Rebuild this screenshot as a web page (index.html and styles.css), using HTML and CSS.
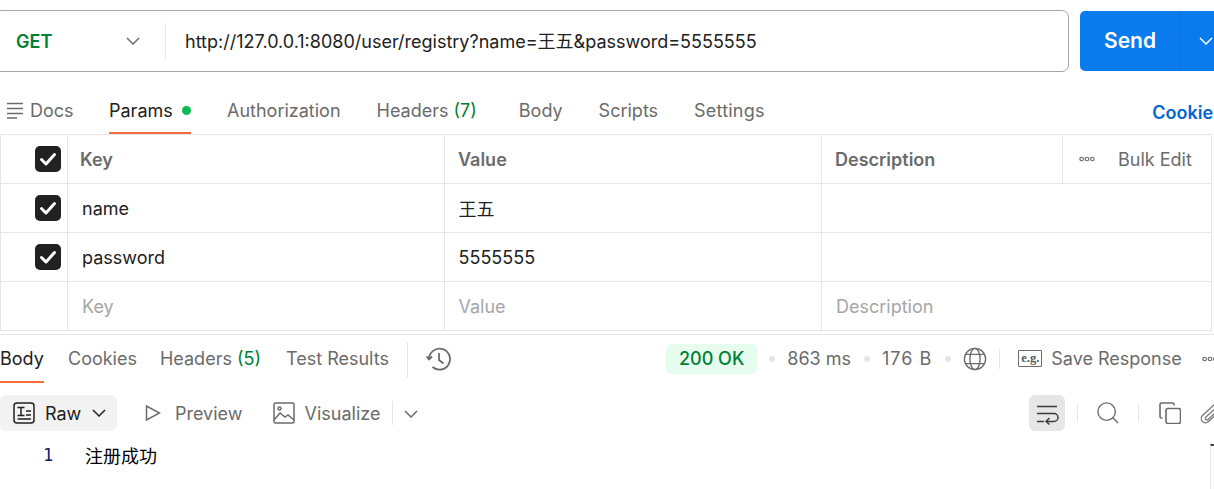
FILE: index.html
```html
<!DOCTYPE html>
<html lang="zh">
<head>
<meta charset="utf-8">
<title>Postman</title>
<link rel="stylesheet" href="styles.css">
</head>
<body>
<div class="page">
  <div class="urlrow">
    <div class="urlbox">
      <span class="method">GET</span>
      <svg class="chev method-chev" viewBox="0 0 14 8"><path d="M1 1l6 6 6-6"/></svg>
      <span class="urldiv"></span>
      <span class="url">http://127.0.0.1:8080/user/registry?name=王五&amp;password=5555555</span>
    </div>
    <div class="send">
      <span class="send-label">Send</span>
      <span class="send-more"><svg class="chev white" viewBox="0 0 14 8"><path d="M1 1l6 6 6-6"/></svg></span>
    </div>
  </div>

  <div class="reqtabs">
    <span class="tab docs"><svg class="ic18" viewBox="0 0 18 18"><path d="M1 1.500h16M1 6.500h16M1 11.500h16M1 16h10"/></svg>Docs</span>
    <span class="tab active params">Params<i class="dot"></i></span>
    <span class="tab auth">Authorization</span>
    <span class="tab hdrs">Headers <em>(7)</em></span>
    <span class="tab body-t">Body</span>
    <span class="tab scripts">Scripts</span>
    <span class="tab settings">Settings</span>
    <span class="cookies">Cookies</span>
  </div>

  <div class="table">
    <div class="row">
      <div class="cell c0"><span class="check"><svg viewBox="0 0 26 26"><path d="M6.500 13.500l4.500 4.500 8.500-9.500"/></svg></span></div>
      <div class="cell c1 th">Key</div>
      <div class="cell c2 th">Value</div>
      <div class="cell c3 th">Description</div>
      <div class="cell c4"><svg class="more" viewBox="0 0 18 6"><circle cx="3" cy="3" r="2"/><circle cx="9" cy="3" r="2"/><circle cx="15" cy="3" r="2"/></svg><span class="bulk">Bulk Edit</span></div>
    </div>
    <div class="row">
      <div class="cell c0"><span class="check"><svg viewBox="0 0 26 26"><path d="M6.500 13.500l4.500 4.500 8.500-9.500"/></svg></span></div>
      <div class="cell c1">name</div>
      <div class="cell c2">王五</div>
      <div class="cell c3w"></div>
    </div>
    <div class="row">
      <div class="cell c0"><span class="check"><svg viewBox="0 0 26 26"><path d="M6.500 13.500l4.500 4.500 8.500-9.500"/></svg></span></div>
      <div class="cell c1">password</div>
      <div class="cell c2">5555555</div>
      <div class="cell c3w"></div>
    </div>
    <div class="row ph">
      <div class="cell c0"></div>
      <div class="cell c1">Key</div>
      <div class="cell c2">Value</div>
      <div class="cell c3w">Description</div>
    </div>
  </div>

  <div class="resbar">
    <span class="tab active r-body">Body</span>
    <span class="tab r-cookies">Cookies</span>
    <span class="tab r-hdrs">Headers <em>(5)</em></span>
    <span class="tab r-test">Test Results</span>
    <span class="vline r-v1"></span>
    <svg class="hist" viewBox="0 0 24 24"><path d="M2 12.500A10.500 10.500 0 1 1 5.500 20M-0.500 9.500l2.500 3 3-3M12 6v7l4.500 3.500"/></svg>
    <div class="status">
      <span class="ok">200 OK</span>
      <i class="sep"></i><span>863 ms</span>
      <i class="sep"></i><span class="size">176 B</span>
      <i class="sep"></i>
      <svg class="globe" viewBox="0 0 26 26"><circle cx="13" cy="13" r="11.500"/><ellipse cx="13" cy="13" rx="5.500" ry="11.500"/><path d="M3 8h20M3 18h20"/></svg>
      <span class="vline v2"></span>
      <span class="eg">e.g.</span>
      <span class="save">Save Response</span>
      <svg class="more more2" viewBox="0 0 18 6"><circle cx="3" cy="3" r="2"/><circle cx="9" cy="3" r="2"/><circle cx="15" cy="3" r="2"/></svg>
    </div>
  </div>

  <div class="viewbar">
    <span class="raw">
      <svg class="ic22" viewBox="0 0 22 22"><rect x="1" y="1" width="20" height="20" rx="3"/><path d="M4.500 5.500h7M8 5.500v8M4.500 13.500h7M13 9h5M13 13h5M4.500 17h13.500"/></svg>
      Raw
      <svg class="chev dark" viewBox="0 0 14 8"><path d="M1 1l6 6 6-6"/></svg>
    </span>
    <span class="view preview"><svg class="ic18p" viewBox="0 0 16 18"><path d="M1.500 2v14l13-7z"/></svg>Preview</span>
    <span class="view vis"><svg class="ic22" viewBox="0 0 22 22"><rect x="1" y="1" width="20" height="20" rx="1.500"/><path d="M1 18l6-7 5 4 3-2 6 5"/><circle cx="6.500" cy="6.500" r="1.500"/></svg>Visualize</span>
    <span class="vline v3"></span>
    <svg class="chev v-chev" viewBox="0 0 14 8"><path d="M1 1l6 6 6-6"/></svg>
    <div class="tools">
      <span class="wrap"><svg viewBox="0 0 22 20"><path d="M1 1.500h20M1 8.500h17a4 4 0 0 1 0 8h-8M1 16.500h7M13.500 13l-3.500 3.500 3.500 3"/></svg></span>
      <span class="vline v4"></span>
      <svg class="search" viewBox="0 0 24 24"><circle cx="10.500" cy="10.500" r="9.500"/><path d="M17 17l6 6"/></svg>
      <span class="vline v5"></span>
      <svg class="copy" viewBox="0 0 22 22"><rect x="7" y="6.500" width="14.500" height="15" rx="2"/><path d="M3.500 16H2.500A1.500 1.500 0 0 1 1 14.500V2.500A1.500 1.500 0 0 1 2.500 1H13.500A1.500 1.500 0 0 1 15 2.500V3.500"/></svg>
      <svg class="clip" viewBox="0 0 22 22"><path d="M15 2L2.500 13.500a4 4 0 0 0 6 6L21 8M17 5L6 15a1.500 1.500 0 0 0 2 2.500L18 8"/></svg>
    </div>
  </div>

  <div class="code">
    <span class="ln">1</span>
    <span class="resp">注册成功</span>
    <span class="scroll"></span>
  </div>
</div>
</body>
</html>
```

FILE: styles.css
```css
* { box-sizing: border-box; }
html, body { margin: 0; padding: 0; height: 489px; overflow: hidden; background: #fff; }
body { font-family: Inter, "Noto Sans CJK SC", sans-serif; font-size: 18px; color: #212121; }
.page { width: 1214px; height: 489px; overflow: hidden; }

.urlrow { display: flex; align-items: center; padding-top: 10px; height: 72px; margin-left: -6px; width: 1320px; }
.urlbox { width: 1075px; height: 62px; border: 1px solid #a6a6a6; border-radius: 7px; display: flex; align-items: center; padding-left: 21px; flex: none; }
.method { color: #007f31; font-weight: 600; font-size: 18px; width: 110px; }
.chev { fill: none; stroke: #6b6b6b; stroke-width: 1.500; width: 14px; height: 8px; flex: none; }
.urldiv { width: 1px; height: 36px; background: #e6e6e6; margin-left: 25px; margin-right: 19px; }
.url { font-size: 18px; color: #212121; white-space: nowrap; padding-bottom: 2px; }
.send { flex: none; display: flex; width: 200px; height: 60px; margin-left: 11px; background: #097bed; border-radius: 5px; color: #fff; font-weight: 600; font-size: 21px; }
.send-label { width: 101px; display: flex; align-items: center; justify-content: center; border-right: 1px solid #0a6fd6; padding-bottom: 2px; }
.send-more { padding-left: 18px; display: flex; align-items: center; }
.white { stroke: #fff; }

.tab { color: #6b6b6b; white-space: nowrap; display: inline-flex; align-items: center; }
.tab em { font-style: normal; color: #007f31; margin-left: 5px; }
.reqtabs { display: flex; height: 62px; padding-left: 6px; align-items: stretch; }
.reqtabs .tab { padding-top: 16px; padding-bottom: 1px; }
.ic18 { width: 18px; height: 18px; fill: none; stroke: #6b6b6b; stroke-width: 1.500; margin-right: 6px; flex: none; }
.docs { width: 103px; }
.active { color: #212121; border-bottom: 2px solid #ff6c37; }
.reqtabs .active { width: 82px; margin-right: 36px; padding-top: 17px; padding-bottom: 0; color: #212121; }
.dot { width: 9px; height: 9px; background: #0cbb52; border-radius: 50%; margin-left: 9px; }
.auth { margin-right: 36px; }
.hdrs { margin-right: 42px; }
.body-t { margin-right: 36px; }
.scripts { margin-right: 36px; }
.settings { letter-spacing: 0.2px; }
.cookies { margin-left: auto; color: #0265d2; font-weight: 600; padding-top: 30px; white-space: nowrap; margin-right: -9px; }

.table { width: 1212px; border-top: 1px solid #e6e6e6; border-left: 1px solid #e6e6e6; border-right: 1px solid #e6e6e6; }
.row { display: flex; height: 49px; border-bottom: 1px solid #e6e6e6; align-items: stretch; }
.cell { display: flex; align-items: center; border-right: 1px solid #e6e6e6; padding-left: 14px; flex: none; }
.c0 { width: 67px; padding-left: 34px; }
.c1 { width: 377px; }
.c2 { width: 377px; padding-left: 13.500px; }
.c3 { width: 241px; }
.c4 { width: 149px; border-right: 0; padding-left: 16px; }
.c3w { width: 390px; border-right: 0; }
.th { font-weight: 600; color: #6b6b6b; }
.th.c1 { padding-left: 12px; }
.th.c2, .th.c3 { padding-left: 13px; }
.check { width: 26px; height: 26px; background: #212121; border-radius: 5px; display: block; }
.check svg { width: 26px; height: 26px; display: block; fill: none; stroke: #fff; stroke-width: 3; stroke-linecap: round; stroke-linejoin: round; }
.more { width: 16px; height: 6px; fill: none; stroke: #6b6b6b; stroke-width: 1.300; flex: none; }
.bulk { color: #6b6b6b; margin-left: 23px; white-space: nowrap; }
.ph .cell { color: #a6a6a6; padding-top: 1px; }
.ph .c3w { padding-left: 14px; }

.resbar { display: flex; height: 49px; margin-top: 3px; border-top: 1px solid #e6e6e6; align-items: stretch; }
.resbar .tab { padding-bottom: 2px; }
.resbar .active { padding: 0 1px 0 0; width: 44px; margin-right: 24px; }
.r-cookies { margin-right: 23px; }
.r-hdrs { margin-right: 25px; }
.r-test { margin-right: 18px; }
.vline { width: 1px; background: #e6e6e6; flex: none; }
.r-v1 { height: 36px; margin-top: 7px; }
.hist { width: 24px; height: 24px; margin: 12px 0 0 19px; fill: none; stroke: #6b6b6b; stroke-width: 1.800; overflow: visible; }
.status { display: flex; align-items: center; margin-left: 215px; color: #6b6b6b; white-space: nowrap; height: 47px; }
.ok { background: #e5fcef; color: #007f31; border-radius: 6px; padding: 0 13px; height: 30px; display: flex; align-items: center; font-weight: 500; }
.sep { width: 6px; height: 6px; border-radius: 50%; background: #e6e6e6; margin: 0 12.500px; flex: none; }
.ok + .sep { margin: 0 12px; }
.size { letter-spacing: 1px; }
.globe { width: 24px; height: 24px; fill: none; stroke: #6b6b6b; stroke-width: 1.500; flex: none; }
.v2 { height: 20px; margin-left: 12px; margin-right: 18px; }
.eg { width: 24px; height: 17px; border: 1.500px solid #6b6b6b; border-radius: 1px; font-family: "Liberation Serif", serif; font-size: 12.500px; font-weight: 700; display: flex; align-items: center; justify-content: center; color: #555; }
.save { margin-left: 9px; }
.more2 { margin-left: 20px; }

.viewbar { display: flex; height: 48px; padding-top: 12px; align-items: flex-start; }
.raw { width: 117px; height: 36px; background: #f2f2f2; border-radius: 6px; display: flex; align-items: center; padding-left: 13px; color: #212121; gap: 10px; flex: none; }
.raw .ic22 { stroke: #212121; margin: 0; }
.dark { stroke: #212121; margin-left: 1px; }
.ic22 { width: 22px; height: 22px; fill: none; stroke: #6b6b6b; stroke-width: 1.500; flex: none; margin-right: 10px; }
.view { color: #6b6b6b; height: 36px; display: flex; align-items: center; flex: none; }
.preview { margin-left: 28px; margin-right: 30px; }
.ic18p { width: 16px; height: 18px; fill: none; stroke: #6b6b6b; stroke-width: 1.500; margin-right: 14px; flex: none; }
.v3 { height: 24px; margin: 6px 0 0 12px; }
.v-chev { margin: 15px 0 0 11px; }
.tools { margin-left: 611px; display: flex; align-items: center; height: 36px; flex: none; }
.wrap { width: 36px; height: 36px; background: #e6e6e6; border-radius: 6px; display: flex; align-items: center; justify-content: center; }
.wrap svg { width: 22px; height: 20px; fill: none; stroke: #3b3b3b; stroke-width: 1.500; overflow: visible; margin-top: 4px; }
.v4 { height: 18px; margin: 0 19px 0 12px; }
.search { width: 22px; height: 22px; fill: none; stroke: #6b6b6b; stroke-width: 1.500; flex: none; }
.v5 { height: 18px; margin: 0 20px 0 19px; }
.copy { width: 22px; height: 22px; fill: none; stroke: #6b6b6b; stroke-width: 1.600; flex: none; }
.clip { width: 22px; height: 22px; fill: none; stroke: #7a7a7a; stroke-width: 1.300; margin-left: 19px; flex: none; }

.code { display: flex; height: 58px; padding-top: 12px; position: relative; }
.ln { width: 85px; padding-left: 43px; color: #0b1a6b; font-size: 17px; line-height: 24px; font-family: "DejaVu Sans Mono", monospace; }
.resp { font-size: 18px; line-height: 24px; color: #000; font-family: "Noto Sans CJK SC", sans-serif; }
.scroll { position: absolute; left: 1210px; top: 13px; width: 4px; height: 45px; border-left: 1px solid #e6e6e6; border-top: 2px solid #444; }
```
